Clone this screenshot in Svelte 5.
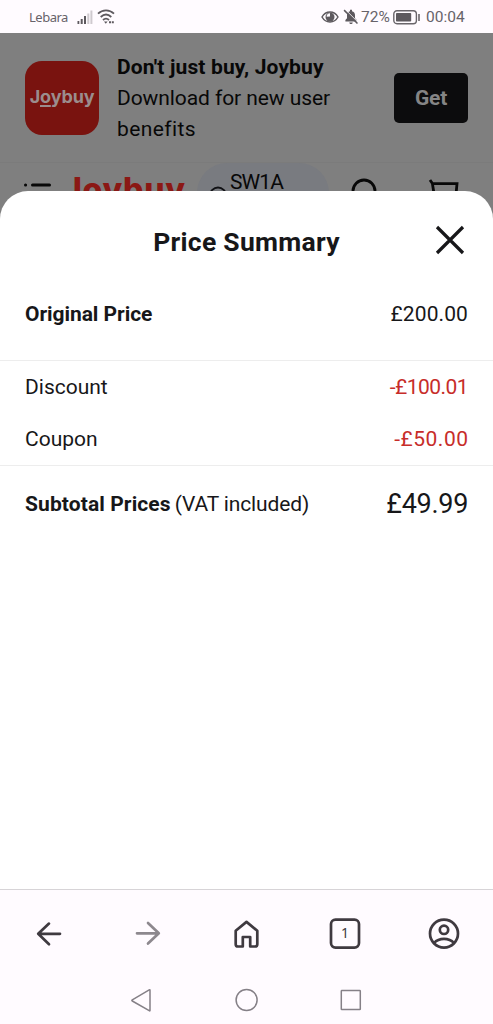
<script>
  const deductions = [
    { label: 'Discount', value: '-£100.01', cls: 'discount' },
    { label: 'Coupon', value: '-£50.00', cls: 'coupon' }
  ];
</script>

<div class="phone">
  <header class="status">
    <span class="carrier">Lebara</span>
    <svg class="signal" width="16" height="15" viewBox="0 0 16 15">
      <g fill="#5d595e"><rect x="0.5" y="11" width="1.8" height="3" /><rect x="3.7" y="9" width="2" height="5" /><rect x="7" y="6" width="2" height="8" /></g>
      <g fill="#cfcacf"><rect x="10.3" y="3.5" width="2" height="10.5" /><rect x="13.4" y="0.5" width="2" height="13.5" /></g>
    </svg>
    <svg class="wifi" width="18" height="16" viewBox="0 0 18 16" fill="none" stroke="#5d595e" stroke-width="1.8">
      <path d="M1 4.6C5.6.2 12.4.2 17 4.6M3.7 8C7 4.9 11 4.9 14.3 8M6 11c2-1.8 4-1.8 6 0" />
      <path d="M7 12.5h3.6l-1.8 2.3z" fill="#5d595e" stroke="none" /><path d="M12 13.3h2M14.8 13.3h2" stroke-width="2" />
    </svg>
    <span class="spacer"></span>
    <svg class="eye" width="18" height="14" viewBox="0 0 18 14">
      <path d="M1 7C4.8 0.4 13.2.4 17 7 13.2 13.6 4.8 13.6 1 7z" fill="none" stroke="#5d595e" stroke-width="1.5" />
      <circle cx="9" cy="7" r="4.5" fill="#5d595e" /><path d="M9 3.2A3.4 3.4 0 0 0 5.7 6.8L9 6.5z" fill="#fffbff" />
    </svg>
    <svg class="bell" width="16" height="16" viewBox="0 0 16 16">
      <path d="M2.4 12.5V11L4 9.3V6c0-2 1.2-3.3 3-3.8V.8h2v1.4c1.8.5 3 1.8 3 3.8v3.3l1.7 1.7v1.5zM6.2 13.5h3.6c-.5 2-3.1 2-3.6 0z" fill="#5d595e" />
      <path d="M2.6.9 15.6 13.9" stroke="#fffbff" stroke-width="1" /><path d="M1.1 1.1 14.5 14.5" stroke="#5d595e" stroke-width="1.5" />
    </svg>
    <span class="percent">72%</span>
    <svg class="battery" width="28" height="15" viewBox="0 0 28 15">
      <rect x="0.8" y="0.8" width="22.6" height="13" rx="3.2" fill="none" stroke="#69656a" stroke-width="1.4" />
      <rect x="3" y="3" width="15.2" height="8.6" rx="0.8" fill="#5d595e" /><path d="M26 4v7" stroke="#69656a" stroke-width="1.6" />
    </svg>
    <span class="clock">00:04</span>
  </header>

  <main>
    <div class="behind">
      <section class="banner">
        <div class="logo">J<span class="o">o</span>ybuy</div>
        <div class="copy">
          <b>Don't just buy, Joybuy</b>
          <span class="line1">Download for new user</span>
          <span class="line2">benefits</span>
        </div>
        <button class="get">Get</button>
      </section>
      <div class="toolbar">
        <svg class="menu" width="30" height="24" viewBox="0 0 30 24" fill="none" stroke="#080808" stroke-width="3" stroke-linecap="round">
          <path d="M2.5 4h.1M9.5 4h17M2.5 12h.1M9.5 12h17M2.5 20h.1M9.5 20h17" />
        </svg>
        <span class="brand">Joybuy</span>
        <div class="address">
          <svg width="20" height="24" viewBox="0 0 20 24" fill="none" stroke="#101114" stroke-width="1.8"><path d="M10 23C4 17 2 13 2 9.5a8 8 0 0 1 16 0C18 13 16 17 10 23z" /></svg>
          <span>SW1A</span>
        </div>
        <svg class="search" width="28" height="28" viewBox="0 0 28 28" fill="none" stroke="#080808" stroke-width="2.8"><circle cx="13" cy="13" r="11" /><path d="m21 21 6 6" /></svg>
        <svg class="cart" width="32" height="28" viewBox="0 0 32 28" fill="none" stroke="#080808" stroke-width="2.8"><path d="M2 2l2.4 3.5L7 22h20M4 5.6h25l-1 11H6" /></svg>
      </div>
    </div>

    <section class="sheet">
      <div class="heading">
        <h1>Price Summary</h1>
        <svg class="close" width="30" height="30" viewBox="0 0 30 30" stroke="#171719" stroke-width="3.2"><path d="M2 2 28 28M28 2 2 28" /></svg>
      </div>
      <div class="row original"><b>Original Price</b><span>£200.00</span></div>
      <div class="deductions">
        {#each deductions as d}
          <div class="row"><span>{d.label}</span><span class="red {d.cls}">{d.value}</span></div>
        {/each}
      </div>
      <div class="row subtotal">
        <div class="sub"><b>Subtotal Prices</b><span class="vat">(VAT included)</span></div>
        <span class="total">£49.99</span>
      </div>
    </section>
  </main>

  <footer>
    <nav class="browser">
      <svg width="32" height="32" viewBox="0 0 32 32" fill="none" stroke="#3f3a40" stroke-width="2.7" stroke-linecap="round" stroke-linejoin="round"><path d="M27 15.8H5.5M16 5.6 5.2 15.8l10.8 10.5" /></svg>
      <svg width="32" height="32" viewBox="0 0 32 32" fill="none" stroke="#8d888e" stroke-width="2.7" stroke-linecap="round" stroke-linejoin="round"><path d="M5 15.3H26.5M16 5 26.8 15.3 16 25.6" /></svg>
      <svg width="32" height="32" viewBox="0 0 32 32" fill="none" stroke="#3f3a40" stroke-width="2.7" stroke-linejoin="round"><path d="M5.7 12.7 16.5 3.9l10.8 8.8v13.5q0 2.3-2.3 2.3H20.2v-9.5h-7.4v9.5H8Q5.7 28.5 5.7 26.2z" /></svg>
      <svg width="32" height="32" viewBox="0 0 32 32"><rect x="2" y="1.6" width="28" height="28" rx="4.5" fill="none" stroke="#3f3a40" stroke-width="2.7" /><text x="16" y="20.4" text-anchor="middle" font-family="Noto Sans" font-size="14" fill="#3f3a40">1</text></svg>
      <svg width="32" height="32" viewBox="0 0 32 32" fill="none" stroke="#3f3a40" stroke-width="2.7"><circle cx="16" cy="15.6" r="14" /><circle cx="16" cy="11.8" r="4.2" /><path d="M6 25.1c5-5.6 15-5.6 20 0" /></svg>
    </nav>
    <nav class="system">
      <svg width="24" height="24" viewBox="0 0 24 24"><path d="M19 2.2v20.2q0 .8-.8.3L1.3 13q-.9-.6 0-1.2L18.2 1.8q.8-.4.8.4z" /></svg>
      <svg width="24" height="24" viewBox="0 0 24 24"><circle cx="11.6" cy="12" r="10.5" /></svg>
      <svg width="24" height="24" viewBox="0 0 24 24"><rect x="2.3" y="2.6" width="19" height="19" rx="0.6" /></svg>
    </nav>
  </footer>
</div>

<style>
  :global(body) { margin: 0; background: #fff; }
  * { box-sizing: border-box; }
  .phone { width: 493px; height: 1024px; display: flex; flex-direction: column; overflow: hidden; font-family: Roboto, sans-serif; color: #171719; white-space: nowrap; }
  svg { display: block; flex: none; }
  .status { height: 33px; background: #fffbff; display: flex; align-items: center; padding: 1px 26px 0 29px; color: #67636a; }
  .carrier { font: 13px "Noto Sans", sans-serif; width: 48px; letter-spacing: -0.5px; }
  .wifi { margin-left: 4px; }
  .spacer { flex: 1; }
  .eye { margin-right: 4px; }
  .percent { font-size: 15.5px; margin-left: 2px; width: 31px; }
  .battery { margin-left: 1px; }
  .clock { font-size: 15.5px; margin-left: 5px; width: 41px; }
  main { flex: 1; position: relative; overflow: hidden; background: #7f7f7f; }
  .behind { height: 158px; overflow: hidden; color: #080808; }
  .banner { height: 130px; padding: 0 25px; display: flex; align-items: center; border-bottom: 1px solid #7b7b7b; }
  .logo { width: 74px; height: 74px; border-radius: 17px; background: #79130f; color: #9b8d8d; display: flex; align-items: center; justify-content: center; font: 700 18px Inter, sans-serif; letter-spacing: -0.2px; padding-bottom: 3px; }
  .o { text-decoration: underline; text-decoration-thickness: 2px; text-underline-offset: 2px; }
  .copy { margin: 2px 0 0 18px; display: flex; flex-direction: column; font-size: 21px; line-height: 31px; width: 250px; }
  .copy b { letter-spacing: 0.14px; }
  .line1 { letter-spacing: -0.08px; }
  .line2 { letter-spacing: 0.4px; }
  .get { margin-left: auto; width: 74px; height: 50px; padding: 0; border: 0; border-radius: 5px; background: #0c0c0d; color: #858585; font: 700 21px Roboto, sans-serif; letter-spacing: -0.2px; }
  .toolbar { height: 60px; display: flex; align-items: flex-start; padding-left: 23px; }
  .menu { margin-top: 18px; }
  .brand { margin: 9px 0 0 10px; width: 122px; font: 800 32px/36px Inter, sans-serif; letter-spacing: 0.7px; color: #8b1814; }
  .address { margin-left: 12px; width: 132px; height: 60px; border-radius: 30px; background: #797b80; display: flex; padding: 0 0 0 11px; font-size: 21px; line-height: 21px; }
  .address svg { margin-top: 23px; }
  .address span { margin: 9px 0 0 2px; letter-spacing: -0.9px; }
  .search { margin: 14.5px 0 0 21.5px; }
  .cart { margin: 14.5px 0 0 49.5px; }
  .sheet { position: absolute; inset: 158px 0 0; background: #fff; border-radius: 28px 28px 0 0; overflow: hidden; }
  .heading { height: 96px; display: grid; grid-template-columns: 1fr auto 1fr; align-items: center; padding: 5px 28px 0 28px; }
  h1 { grid-column: 2; margin: 0; font-size: 26.5px; line-height: 32px; letter-spacing: 0.28px; }
  .close { justify-self: end; margin-bottom: 4px; }
  .row { display: flex; align-items: center; justify-content: space-between; padding: 0 25px; font-size: 21px; }
  .original { height: 74px; padding-bottom: 20px; border-bottom: 1px solid #ededed; }
  .original b { letter-spacing: -0.06px; }
  .original span { letter-spacing: 0.1px; }
  .deductions { height: 105px; border-bottom: 1px solid #ededed; }
  .deductions .row { height: 52px; }
  .red { color: #c72d29; }
  .discount { letter-spacing: -0.55px; }
  .coupon { letter-spacing: 0.5px; margin-right: -0.5px; }
  .subtotal { height: 76px; }
  .sub { display: flex; }
  .sub b { letter-spacing: 0.1px; }
  .vat { margin-left: 4px; letter-spacing: -0.13px; }
  .total { font-size: 27px; letter-spacing: -0.3px; }
  footer { height: 135px; background: #fffbff; border-top: 1px solid #d7d4d7; }
  .browser { height: 87px; display: grid; grid-template-columns: repeat(5, 1fr); justify-items: center; align-items: center; }
  .system { height: 46px; display: flex; justify-content: center; align-items: center; gap: 80px; }
  .system svg { fill: none; stroke: #858087; stroke-width: 1.5; }
</style>
